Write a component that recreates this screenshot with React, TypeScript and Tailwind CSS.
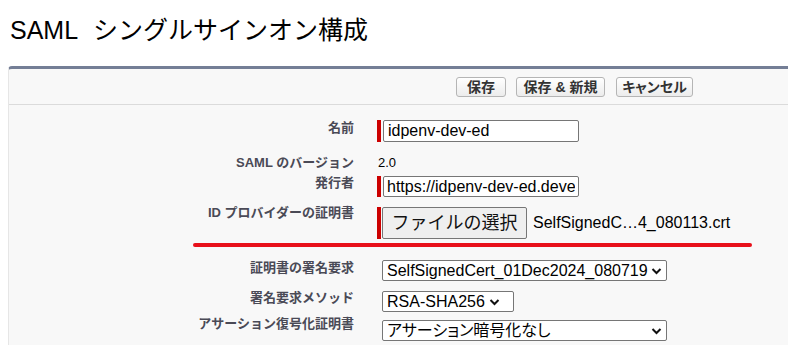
import React from 'react';

const font = "font-['Liberation_Sans','Noto_Sans_CJK_JP',sans-serif]";

function Chevron() {
  return (
    <svg width="11" height="8" viewBox="0 0 11 8" className="shrink-0">
      <polyline points="1.5,2 5.5,6 9.5,2" fill="none" stroke="#111" strokeWidth="2" />
    </svg>
  );
}

function Row({ label, rowClass, labelClass, children }: { label: string; rowClass: string; labelClass: string; children: React.ReactNode }) {
  return (
    <div className={`flex ${rowClass}`}>
      <div className={`w-[345px] shrink-0 text-right text-[13px] leading-[16px] font-bold text-[#4a4a56] ${labelClass}`}>
        {label}
      </div>
      <div className="ml-[23px] flex items-start">{children}</div>
    </div>
  );
}

function Required() {
  return <div className="w-[4px] self-stretch bg-[#cc0000]" />;
}

function FakeSelect({ width, text, spread }: { width: string; text: string; spread?: boolean }) {
  return (
    <div className={`ml-[5px] h-[21px] ${width} flex items-center ${spread ? 'justify-between' : 'gap-[4px]'} border border-[#767676] rounded-[2px] bg-white pl-[4px] pr-[4px] text-[16px] text-black [font-feature-settings:'palt']`}>
      <span className="whitespace-nowrap leading-[19px]">{text}</span>
      <Chevron />
    </div>
  );
}

export default function App() {
  return (
    <div className={`relative w-[788px] h-[345px] overflow-hidden bg-white ${font}`}>
      <h1 className="pt-[14px] pl-[10px] text-[25px] leading-[32px] font-normal text-black [word-spacing:9px]">
        SAML シングルサインオン構成
      </h1>

      <div className="mt-[20px] ml-[8px] w-[800px] h-[300px] bg-[#f8f8f8] border-t-[3px] border-t-[#747e96] border-l border-l-[#e6e6e6] rounded-tl-[4px]">
        {/* button bar */}
        <div className="h-[36px] border-b border-b-[#dbdbdb] pt-[8px] pl-[447px] flex gap-[10px] [font-feature-settings:'palt']">
          {['保存', '保存 & 新規', 'キャンセル'].map((t, i) => (
            <button
              key={t}
              className={`h-[20px] ${i === 0 ? 'w-[50px]' : i === 1 ? 'w-[89px]' : 'w-[77px] ml-[1px]'} border border-[#b5b5b5] rounded-[3px] bg-linear-to-b from-white to-[#ececec] text-[14px] leading-[18px] font-bold text-[#333]`}
            >
              {t}
            </button>
          ))}
        </div>

        {/* fields */}
        <div className="flex flex-col">
          <Row label="名前" rowClass="mt-[15px]" labelClass="">
            <Required />
            <input
              readOnly
              defaultValue="idpenv-dev-ed"
              className="ml-[2px] w-[196px] h-[22px] border border-[#767676] rounded-[2px] bg-white px-[4px] text-[16px] text-black outline-none"
            />
          </Row>

          <Row label="SAML のバージョン" rowClass="mt-[13px]" labelClass="">
            <span className="ml-[1px] text-[13px] leading-[16px] text-black">2.0</span>
          </Row>

          <Row label="発行者" rowClass="mt-[5px]" labelClass="-mt-[1px]">
            <Required />
            <input
              readOnly
              defaultValue="https://idpenv-dev-ed.develop.my.salesforce.com"
              className="ml-[2px] w-[196px] h-[21px] border border-[#767676] rounded-[2px] bg-white px-[3px] text-[16px] text-black outline-none"
            />
          </Row>

          <Row label="ID プロバイダーの証明書" rowClass="mt-[10px]" labelClass="-mt-[2px]">
            <Required />
            <button className="ml-[1px] h-[32px] w-[145px] border border-[#767676] rounded-[2px] bg-[#efefef] text-[18px] leading-[22px] text-[#111]">
              ファイルの選択
            </button>
            <span className="ml-[6px] self-center text-[16px] text-black whitespace-nowrap">SelfSignedC…4_080113.crt</span>
          </Row>

          <Row label="証明書の署名要求" rowClass="mt-[21px]" labelClass="">
            <FakeSelect width="w-[285px]" text="SelfSignedCert_01Dec2024_080719" spread />
          </Row>

          <Row label="署名要求メソッド" rowClass="mt-[10px]" labelClass="-mt-[1px]">
            <FakeSelect width="w-[132px]" text="RSA-SHA256" />
          </Row>

          <Row label="アサーション復号化証明書" rowClass="mt-[8px]" labelClass="-mt-[4px]">
            <FakeSelect width="w-[285px]" text="アサーション暗号化なし" spread />
          </Row>
        </div>
      </div>

      {/* red annotation underline */}
      <div className="absolute left-[193px] top-[243px] w-[559px] h-[4px] rounded-full bg-[#e8101a]" />
    </div>
  );
}
